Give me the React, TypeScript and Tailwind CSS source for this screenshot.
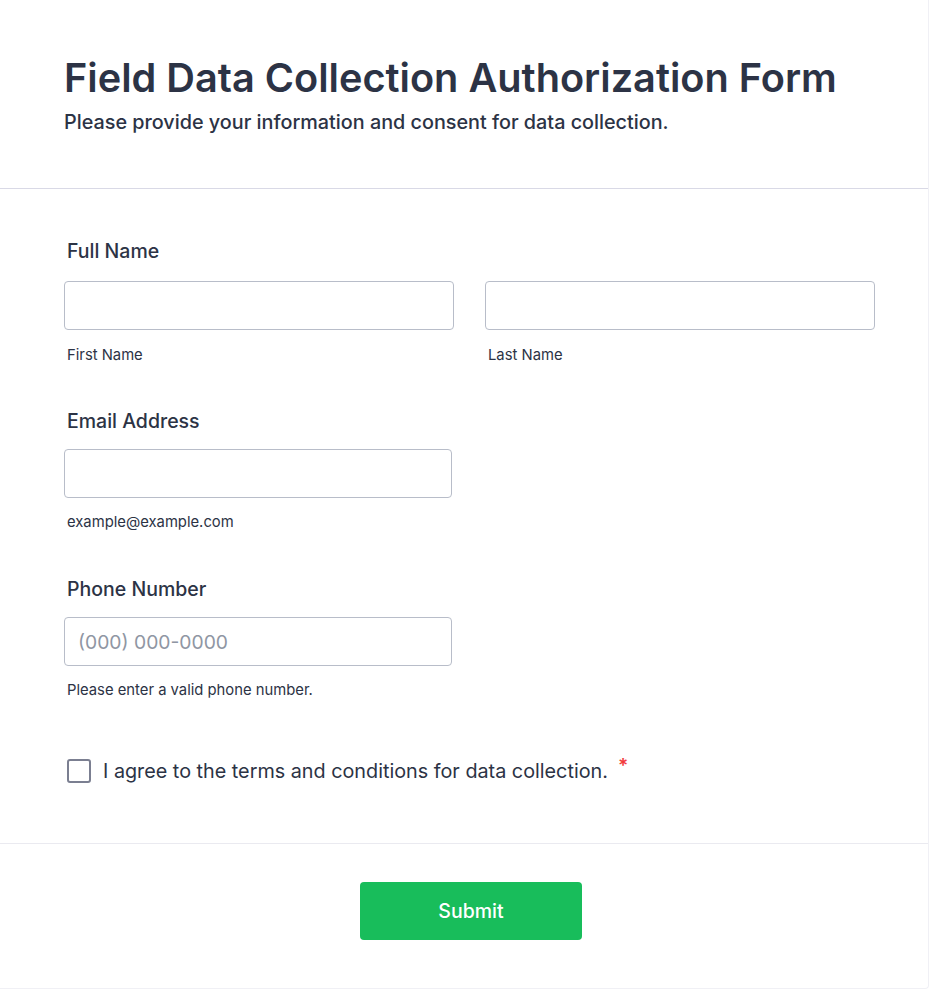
import React from "react";

function FieldLabel({ children }: { children: React.ReactNode }) {
  return (
    <label className="block pl-[3px] text-[19.5px] leading-[24px] font-medium text-[#2c3345]">
      {children}
    </label>
  );
}

function SubLabel({ children }: { children: React.ReactNode }) {
  return (
    <p className="pl-[3px] text-[14.8px] leading-[20px] text-[#2c3345]">
      {children}
    </p>
  );
}

function TextInput({ placeholder, className }: { placeholder?: string; className?: string }) {
  return (
    <input
      type="text"
      placeholder={placeholder}
      className={
        "block h-[49px] rounded-[4px] border border-[#b8bdc9] bg-white px-[13px] text-[19.3px] text-[#2c3345] placeholder:text-[#8f96a3] outline-none " +
        (className || "")
      }
    />
  );
}

export default function App() {
  return (
    <div
      className="min-h-[991px] bg-white"
      style={{ fontFamily: "Inter, 'Noto Sans', sans-serif" }}
    >
      <div className="w-[929px] min-h-[989px] rounded-br-[4px] border-r border-b border-[#f0f0f5] bg-white">
        {/* header */}
        <div className="border-b border-[#d9d9e6] px-[64px] pt-[56px] pb-[54px]">
          <h1 className="text-[39.7px] leading-[44px] font-semibold text-[#2c3345]">
            Field Data Collection Authorization Form
          </h1>
          <p className="mt-[10px] text-[19.8px] leading-[24px] font-medium text-[#2c3345]">
            Please provide your information and consent for data collection.
          </p>
        </div>

        {/* fields */}
        <div className="pl-[64px] pr-[52px] pt-[50px] pb-[60px]">
          <FieldLabel>Full Name</FieldLabel>
          <div className="mt-[18px] flex gap-[31px]">
            <div className="w-[390px]">
              <TextInput className="w-full" />
              <div className="mt-[15px]">
                <SubLabel>First Name</SubLabel>
              </div>
            </div>
            <div className="w-[390px]">
              <TextInput className="w-full" />
              <div className="mt-[15px]">
                <SubLabel>Last Name</SubLabel>
              </div>
            </div>
          </div>

          <div className="mt-[44px]">
            <FieldLabel>Email Address</FieldLabel>
            <TextInput className="mt-[16px] w-[388px]" />
            <div className="mt-[14px]">
              <SubLabel>example@example.com</SubLabel>
            </div>
          </div>

          <div className="mt-[45px]">
            <FieldLabel>Phone Number</FieldLabel>
            <TextInput className="mt-[16px] w-[388px]" placeholder="(000) 000-0000" />
            <div className="mt-[14px]">
              <SubLabel>Please enter a valid phone number.</SubLabel>
            </div>
          </div>

          <div className="mt-[59px] flex items-center pl-[3px]">
            <span className="h-[24px] w-[24px] shrink-0 rounded-[3px] border-2 border-[#7b7f91] bg-white" />
            <span className="ml-[12px] text-[19.8px] leading-[24px] text-[#2c3345]">
              I agree to the terms and conditions for data collection.
            </span>
            <span className="ml-[10px] -mt-[10px] text-[19px] leading-[24px] font-semibold text-[#f23a3c]">
              *
            </span>
          </div>
        </div>

        {/* footer */}
        <div className="border-t border-[#eaeaf0] pt-[38px] pb-[48px] pl-[14px] flex justify-center">
          <button className="h-[58px] w-[222px] rounded-[4px] bg-[#18bd5b] pt-[2px] text-[19.5px] font-medium text-white">
            Submit
          </button>
        </div>
      </div>
    </div>
  );
}
